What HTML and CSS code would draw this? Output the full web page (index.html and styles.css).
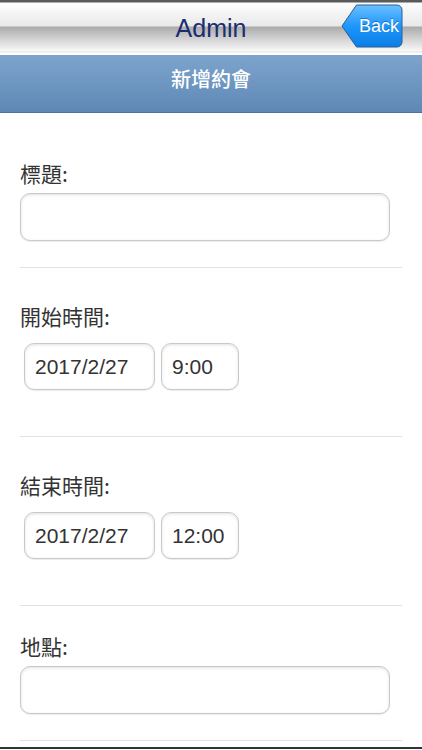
FILE: index.html
```html
<!DOCTYPE html>
<html lang="zh-Hant">
<head>
	<meta charset="UTF-8">
	<meta name="viewport" content="width=device-width, initial-scale=1.0">
	<title>新增約會</title>
	<link rel="stylesheet" href="styles.css">
</head>
<body>
	<!-- Top navigation bar -->
	<div class="navbar">
		<span class="nav-title">Admin</span>
		<a class="back-btn" href="#">
			<svg width="62" height="44" viewBox="0 0 62 44">
				<defs>
					<linearGradient id="backGrad" x1="0" y1="0" x2="0" y2="1">
						<stop offset="0" stop-color="#6cc0ff"/>
						<stop offset="0.5" stop-color="#1e96fb"/>
						<stop offset="1" stop-color="#0a7ee6"/>
					</linearGradient>
				</defs>
				<path d="M15.5,1 H56 A5,5 0 0 1 61,6 V38 A5,5 0 0 1 56,43 H15.5 L1,22 Z" fill="url(#backGrad)" stroke="#2c5f96" stroke-width="1"/>
			</svg>
			<span class="back-label">Back</span>
		</a>
	</div>

	<!-- Page title -->
	<div class="subbar">新增約會</div>

	<form class="form" onsubmit="return false">
		<div class="field field-text">
			<label for="title">標題:</label>
			<input type="text" id="title" class="text-input">
		</div>

		<div class="field field-time">
			<label>開始時間:</label>
			<div class="time-row">
				<input type="text" class="date-input" value="2017/2/27">
				<input type="text" class="clock-input" value="9:00">
			</div>
		</div>

		<div class="field field-time">
			<label>結束時間:</label>
			<div class="time-row">
				<input type="text" class="date-input" value="2017/2/27">
				<input type="text" class="clock-input" value="12:00">
			</div>
		</div>

		<div class="field field-text field-last">
			<label for="place">地點:</label>
			<input type="text" id="place" class="text-input">
		</div>
	</form>

	<div class="bottom-edge"></div>
</body>
</html>
```

FILE: styles.css
```css
body {
	margin: 0;
	padding: 0;
	background-color: #fff;
	font-family: "Liberation Sans", Arial, sans-serif;
	width: 422px;
	height: 750px;
	overflow: hidden;
}

.navbar {
	position: relative;
	height: 55px;
	display: flex;
	align-items: center;
	justify-content: center;
	background: linear-gradient(to bottom,
		#5a5a5a 0, #5a5a5a 2px,
		#fdfdfd 3px, #e9e9e9 26px,
		#ababab 27px, #d6d6d6 40px, #f8f8f8 51px,
		#e2e2e2 52px, #ffffff 53px, #ffffff 55px);
}

.nav-title {
	font-size: 25px;
	color: #1b2c70;
	line-height: 30px;
	margin-top: 1px;
}

.back-btn {
	position: absolute;
	top: 4px;
	left: 341px;
	width: 62px;
	height: 44px;
	text-decoration: none;
}

.back-btn svg {
	display: block;
}

.back-label {
	position: absolute;
	top: 0;
	left: 15px;
	right: 1px;
	line-height: 45px;
	text-align: center;
	font-size: 18px;
	color: #fff;
	text-shadow: 0 -1px 0 rgba(0, 40, 100, 0.4);
}

.subbar {
	box-sizing: border-box;
	height: 58px;
	padding-top: 12px;
	line-height: 24px;
	text-align: center;
	font-family: "Noto Sans CJK TC", "Noto Sans", sans-serif;
	font-size: 20px;
	font-weight: 500;
	color: #fff;
	background: linear-gradient(to bottom, #7ca4cd, #5f88b5);
	border-bottom: 1px solid #4f729b;
}

.form {
	margin: 0;
	padding: 21px 20px 0;
}

.field {
	border-bottom: 1px solid #e2e2e2;
}

.field label {
	display: block;
	font-family: "Noto Sans CJK TC", "Noto Sans", sans-serif;
	font-size: 21px;
	line-height: 26px;
	color: #333;
}

.field-text {
	padding: 26px 0;
}

.field-last {
	padding-top: 27px;
}

.field-time {
	padding: 35px 0 46px;
}

input[type="text"] {
	box-sizing: border-box;
	display: block;
	margin: 0;
	border: 1px solid #c9c9c9;
	border-radius: 10px;
	background-color: #fff;
	box-shadow: inset 0 1px 3px rgba(0, 0, 0, 0.12), 0 1px 1px rgba(0, 0, 0, 0.08);
	font-family: "Liberation Sans", Arial, sans-serif;
	font-size: 21px;
	color: #333;
	padding: 0 10px;
	outline: none;
}

.text-input {
	width: 370px;
	height: 48px;
	margin-top: 7px !important;
}

.time-row {
	display: flex;
	gap: 6px;
	margin: 14px 0 0 4px;
}

.date-input {
	width: 131px;
	height: 47px;
}

.clock-input {
	width: 78px;
	height: 47px;
}

.bottom-edge {
	margin-top: 6px;
	height: 2px;
	background-color: #333;
}
```
